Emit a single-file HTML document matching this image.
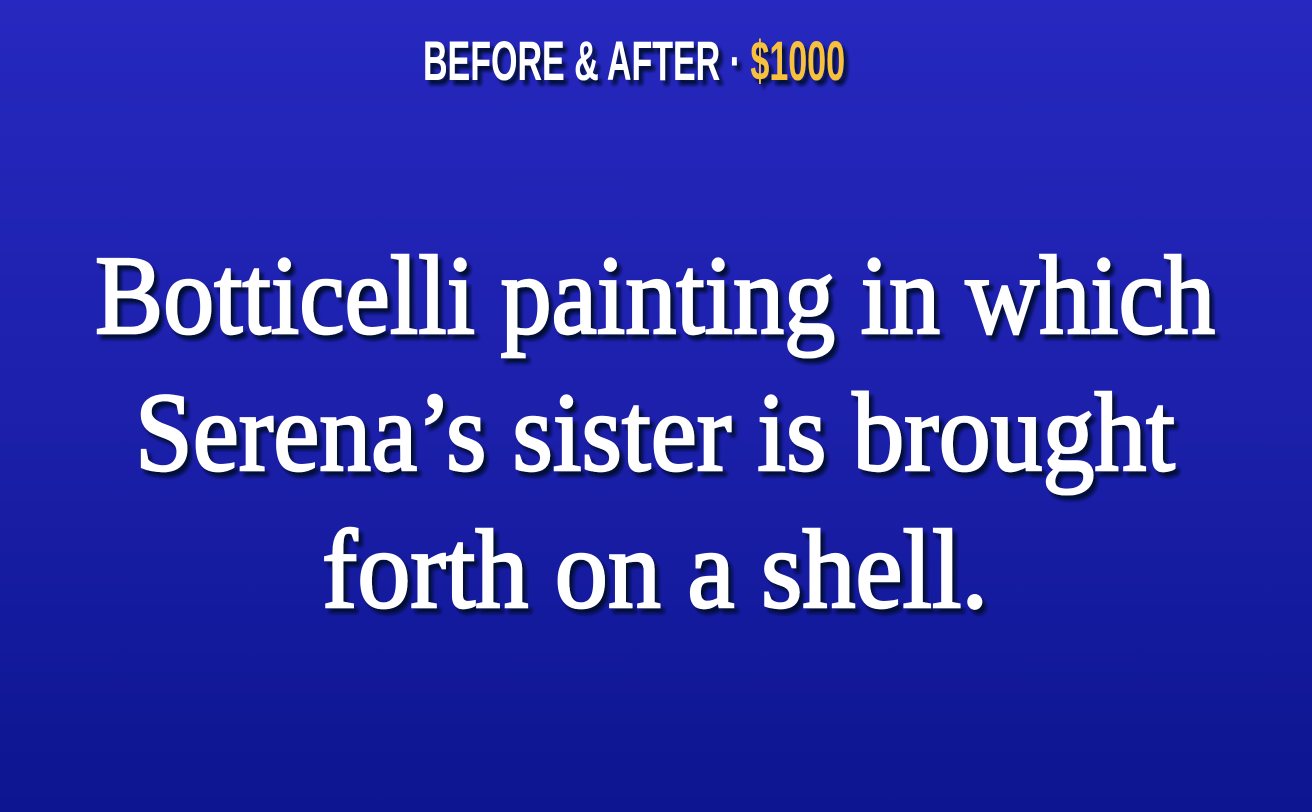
<!DOCTYPE html>
<html><head><meta charset="utf-8"><style>
html,body{margin:0;padding:0}
body{width:1312px;height:812px;overflow:hidden;background:linear-gradient(180deg,#2628bf 0%,#1c20ab 50%,#0d1590 100%)}
svg{display:block}
</style></head><body>
<svg width="1312" height="812" xmlns="http://www.w3.org/2000/svg">
<defs><filter id="s" x="-10%" y="-10%" width="120%" height="130%"><feDropShadow dx="4" dy="5" stdDeviation="1.5" flood-color="#050830" flood-opacity="0.95"/></filter></defs>
<g filter="url(#s)">
<text x="423" y="80" textLength="422" lengthAdjust="spacingAndGlyphs" font-family="Liberation Sans, sans-serif" font-weight="bold" font-size="56" fill="#fff">BEFORE &amp; AFTER · <tspan fill="#f7c03e">$1000</tspan></text>
<g font-family="Liberation Serif, serif" font-size="112" fill="#fff" stroke="#fff" stroke-width="2.5">
<text x="95" y="333" textLength="1120" lengthAdjust="spacingAndGlyphs">Botticelli painting in which</text>
<text x="135" y="470" textLength="1040" lengthAdjust="spacingAndGlyphs">Serena’s sister is brought</text>
<text x="322" y="607" textLength="666" lengthAdjust="spacingAndGlyphs">forth on a shell.</text>
</g>
</g>
</svg>
</body></html>
